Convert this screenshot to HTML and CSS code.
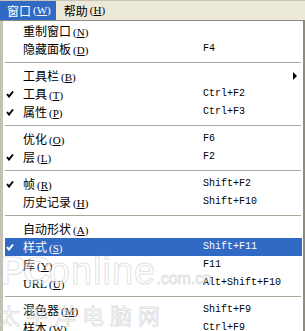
FILE: index.html
```html
<!DOCTYPE html>
<html lang="zh-CN">
<head>
  <meta charset="UTF-8">
  <meta name="viewport" content="width=device-width, initial-scale=1.0">
  <title>窗口菜单</title>
  <link rel="stylesheet" href="styles.css">
</head>
<body>
  <div class="menubar">
    <span class="top active">窗口<span class="key">(<u>W</u>)</span></span>
    <span class="top">帮助<span class="key">(<u>H</u>)</span></span>
  </div>

  <div class="dropdown">
    <div class="item"><span class="check"></span><span class="label">重制窗口<span class="key">(<u>N</u>)</span></span><span class="shortcut"></span></div>
    <div class="item"><span class="check"></span><span class="label">隐藏面板<span class="key">(<u>D</u>)</span></span><span class="shortcut">F4</span></div>
    <div class="sep"></div>
    <div class="item"><span class="check"></span><span class="label">工具栏<span class="key">(<u>B</u>)</span></span><span class="shortcut"></span><span class="arrow"></span></div>
    <div class="item checked"><span class="check"></span><span class="label">工具<span class="key">(<u>T</u>)</span></span><span class="shortcut">Ctrl+F2</span></div>
    <div class="item checked"><span class="check"></span><span class="label">属性<span class="key">(<u>P</u>)</span></span><span class="shortcut">Ctrl+F3</span></div>
    <div class="sep"></div>
    <div class="item"><span class="check"></span><span class="label">优化<span class="key">(<u>O</u>)</span></span><span class="shortcut">F6</span></div>
    <div class="item checked"><span class="check"></span><span class="label">层<span class="key">(<u>L</u>)</span></span><span class="shortcut">F2</span></div>
    <div class="sep"></div>
    <div class="item checked"><span class="check"></span><span class="label">帧<span class="key">(<u>R</u>)</span></span><span class="shortcut">Shift+F2</span></div>
    <div class="item"><span class="check"></span><span class="label">历史记录<span class="key">(<u>H</u>)</span></span><span class="shortcut">Shift+F10</span></div>
    <div class="sep"></div>
    <div class="item"><span class="check"></span><span class="label">自动形状<span class="key">(<u>A</u>)</span></span><span class="shortcut"></span></div>
    <div class="item checked selected"><span class="check"></span><span class="label">样式<span class="key">(<u>S</u>)</span></span><span class="shortcut">Shift+F11</span></div>
    <div class="item"><span class="check"></span><span class="label">库<span class="key">(<u>Y</u>)</span></span><span class="shortcut">F11</span></div>
    <div class="item"><span class="check"></span><span class="label"><span class="latin">URL</span><span class="key">(<u>U</u>)</span></span><span class="shortcut">Alt+Shift+F10</span></div>
    <div class="sep"></div>
    <div class="item"><span class="check"></span><span class="label">混色器<span class="key">(<u>M</u>)</span></span><span class="shortcut">Shift+F9</span></div>
    <div class="item"><span class="check"></span><span class="label">样本<span class="key">(<u>W</u>)</span></span><span class="shortcut">Ctrl+F9</span></div>
  </div>

  <!-- 水印 -->
  <div class="watermark">
    <div class="wm-site"><span class="wm-pc">PC</span><span class="wm-online">online</span><span class="wm-domain">.com.cn</span></div>
    <div class="wm-cn">太平洋电脑网</div>
  </div>
</body>
</html>
```

FILE: styles.css
```css
body {
  margin: 0;
  padding: 0;
  width: 305px;
  height: 331px;
  overflow: hidden;
  background-color: #fff;
  font-family: "Noto Sans CJK SC", sans-serif;
  font-size: 12px;
  color: #000;
  position: relative;
}
.menubar {
  display: flex;
  align-items: stretch;
  background-color: #ece9d8;
  border-top: 1px solid #c9c5b5;
  border-bottom: 1px solid #8d8a7e;
  box-sizing: border-box;
  height: 21px;
}
.top {
  display: flex;
  align-items: center;
  padding: 0 6px 0 7px;
  line-height: 1;
  white-space: nowrap;
}
.top.active {
  background-color: #316ac5;
  color: #fff;
  padding-right: 5px;
}
.top + .top {
  padding-left: 8px;
}
.key {
  font-family: "Liberation Serif", serif;
  font-size: 11px;
  margin-left: 2px;
}
.latin {
  font-family: "Liberation Serif", serif;
  font-size: 12px;
}
.dropdown {
  border-left: 3px solid #c4c1b5;
  border-right: 2px solid #8d8a7e;
  padding-top: 1px;
  background-color: #fff;
}
.item {
  display: grid;
  grid-template-columns: 18px 180px 1fr 12px;
  align-items: center;
  height: 18px;
  margin: 0 1px 0 2px;
  line-height: 1;
  white-space: nowrap;
}
.check {
  height: 8px;
}
.checked .check {
  background: no-repeat 1px 0 url("data:image/svg+xml;utf8,<svg xmlns='http://www.w3.org/2000/svg' width='8' height='8'><path d='M1 4 L3 6.5 L7 1.5' fill='none' stroke='black' stroke-width='2'/></svg>");
}
.checked.selected .check {
  background-image: url("data:image/svg+xml;utf8,<svg xmlns='http://www.w3.org/2000/svg' width='8' height='8'><path d='M1 4 L3 6.5 L7 1.5' fill='none' stroke='white' stroke-width='2'/></svg>");
}
.selected {
  background-color: #316ac5;
  color: #fff;
}
.shortcut {
  font-family: "Liberation Mono", monospace;
  font-size: 10px;
}
.arrow {
  width: 0;
  height: 0;
  margin-left: 3px;
  border-top: 4px solid transparent;
  border-bottom: 4px solid transparent;
  border-left: 4px solid #000;
}
.sep {
  height: 9px;
  margin: 0 2px;
  display: flex;
  align-items: center;
}
.sep::after {
  content: "";
  flex: 1;
  border-top: 1px solid #aca899;
}
.watermark {
  position: absolute;
  left: 0;
  top: 252px;
  pointer-events: none;
  color: rgba(255, 255, 255, 0.45);
  -webkit-text-stroke: 1px rgba(150, 150, 150, 0.3);
}
.wm-site {
  font-family: "Liberation Sans", sans-serif;
  font-weight: bold;
  white-space: nowrap;
  line-height: 1;
}
.wm-pc {
  font-size: 38px;
  letter-spacing: -2px;
}
.wm-online {
  font-size: 38px;
  font-weight: normal;
  letter-spacing: 1px;
}
.wm-domain {
  font-size: 16px;
  font-weight: normal;
}
.wm-cn {
  font-size: 22px;
  letter-spacing: 6px;
  margin-top: 8px;
  margin-left: -2px;
}
```
